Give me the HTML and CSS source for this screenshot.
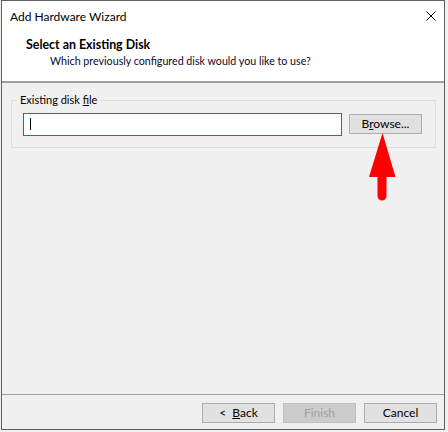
FILE: index.html
```html
<!DOCTYPE html>
<html>
<head>
<meta charset="utf-8">
<link rel="stylesheet" href="styles.css">
</head>
<body>
<div class="window">
  <div class="titlebar">
    <span class="title">Add Hardware Wizard</span>
    <svg class="close" width="10" height="10" viewBox="0 0 10 10"><path d="M0.5 0.5 L9.5 9.5 M9.5 0.5 L0.5 9.5" stroke="#000" stroke-width="1" fill="none"/></svg>
  </div>
  <div class="header">
    <div class="h-title">Select an Existing Disk</div>
    <div class="h-sub">Which previously configured disk would you like to use?</div>
  </div>
  <div class="content">
    <div class="group">
      <span class="legend">Existing disk <u>f</u>ile</span>
      <div class="field"><span class="caret"></span></div>
      <div class="btn">B<u>r</u>owse...</div>
    </div>
    <svg class="arrow" width="30" height="70" viewBox="0 0 30 70">
      <path d="M13.5 0 L0 44 L8.5 44 L8.5 63 A4.5 4.5 0 0 0 17.5 63 L17.5 44 L26.5 44 Z" fill="#ff0000"/>
    </svg>
  </div>
  <div class="footer">
    <div class="btn">&lt;&nbsp; <u>B</u>ack</div>
    <div class="btn disabled">Finish</div>
    <div class="btn">Cancel</div>
  </div>
</div>
</body>
</html>
```
FILE: styles.css
```css
html, body {
  margin: 0;
  padding: 0;
  background: #f0f0f0;
  overflow: hidden;
}
body {
  width: 448px;
  height: 432px;
  font-family: Lato, "Noto Sans", sans-serif;
  font-size: 12px;
  line-height: 16px;
  color: #000;
}
.window {
  margin-left: 1px;
  width: 444px;
  height: 430px;
  box-sizing: border-box;
  border: 1px solid #5f5f5f;
  background: #f0f0f0;
  display: flex;
  flex-direction: column;
}
.titlebar {
  height: 31px;
  background: #fff;
  display: flex;
  align-items: center;
  justify-content: space-between;
  padding: 0 8px 0 8px;
}
.title {
  font-size: 12px;
}
.close {
  margin-top: -1px;
  display: block;
}
.header {
  background: #fff;
  padding: 5px 0 12px 24px;
  border-bottom: 2px solid #a0a0a0;
}
.h-title {
  font-weight: bold;
  font-size: 12.4px;
}
.h-sub {
  padding-left: 24px;
  font-size: 10.7px;
  color: #0a0a28;
}
.content {
  flex: 1;
  position: relative;
  padding: 17px 8px 0 9px;
}
.group {
  position: relative;
  border: 1px solid #dcdcdc;
  height: 46px;
  display: flex;
  align-items: center;
  padding: 0 0 0 11px;
  gap: 7px;
}
.legend {
  position: absolute;
  left: 5px;
  top: -9px;
  background: #f0f0f0;
  padding: 0 3px;
  font-size: 11px;
}
.field {
  width: 317px;
  height: 21px;
  border: 1px solid #0078d7;
  background: #fff;
  position: relative;
}
.caret {
  position: absolute;
  left: 6px;
  top: 4px;
  width: 1px;
  height: 12px;
  background: #000;
}
.btn {
  width: 71px;
  height: 18px;
  border: 1px solid #adadad;
  background: #e1e1e1;
  text-align: center;
  line-height: 18px;
}
.arrow {
  position: absolute;
  left: 367px;
  top: 50px;
}
.footer {
  border-top: 1px solid #a0a0a0;
  display: flex;
  justify-content: flex-end;
  gap: 8px;
  padding: 8px 7px 6px 0;
}
.btn.disabled {
  background: #cccccc;
  border-color: #bfbfbf;
  color: #a0a0a0;
}
```
